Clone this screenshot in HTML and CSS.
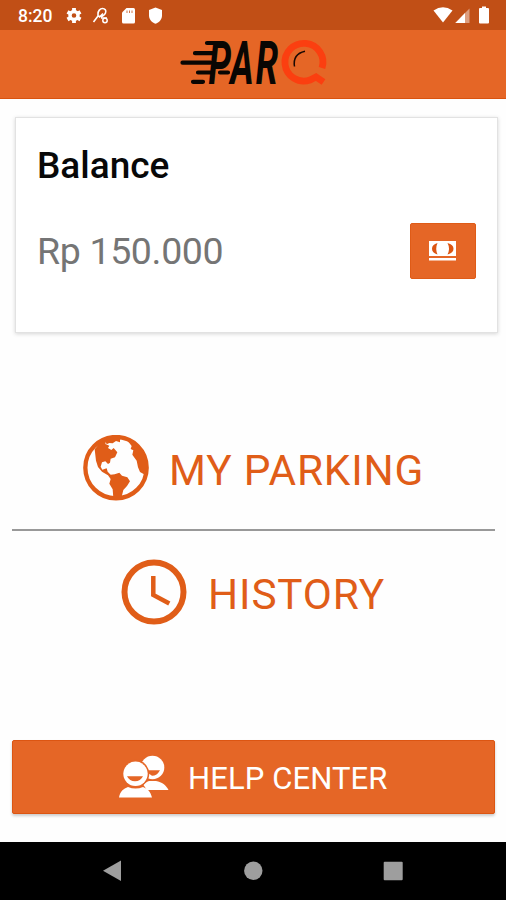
FILE: index.html
```html
<!DOCTYPE html>
<html lang="en">
<head>
<meta charset="utf-8">
<title>ParQ</title>
<link rel="stylesheet" href="styles.css">
</head>
<body>
<div class="status">
  <span class="time">8:20</span>
  <svg class="status-left" viewBox="0 0 100 30" width="100" height="30" fill="#fff">
    <circle cx="9" cy="15.500" r="4" fill="none" stroke="#fff" stroke-width="3.400"/>
    <path d="M9 8v3.500M9 19.500v3.500M2.500 11.800l3.500 2M12 17.500l3.500 2M15.500 11.800l-3.500 2M6 17.500l-3.500 2" stroke="#fff" stroke-width="3.800"/>
    <path d="M33 14c0-3 2-5.500 4.500-5.500s4 2 3 4.500-4 4.500-7.500 3zM33 16l-4.500 6M38 13.500l-4 4M36 18h6" fill="none" stroke="#fff" stroke-width="1.600"/>
    <circle cx="40" cy="20.500" r="2.200" fill="none" stroke="#fff" stroke-width="1.500"/>
    <path d="M61.500 8h7q1.500 0 1.500 1.500V22q0 1.500-1.500 1.500h-10q-1.500 0-1.500-1.500V12.500z"/>
    <path d="M62 10.500v2.500M64.500 10.500v2.500M67 10.500v2.500" stroke="#c35216" stroke-width=".8"/>
    <path d="M90.500 7.500l6.500 2.500v5.500c0 4-3 7-6.500 8.300-3.500-1.300-6.500-4.300-6.500-8.300V10z"/>
  </svg>
  <svg class="status-right" viewBox="0 0 60 30" width="60" height="30" fill="#fff">
    <path d="M-.5 10.500Q9 4 18.500 10.500L9 22.500z"/>
    <path d="M35.500 8.500v14.500h-14.500z" opacity=".45"/>
    <path d="M31 13v10h-9.500z"/>
    <path d="M46 8h2V6.500h4V8h2q1 0 1 1v13.500q0 1-1 1h-8q-1 0-1-1V9q0-1 1-1z"/>
  </svg>
</div>
<header class="header">
  <svg class="logo" viewBox="170 30 170 68" width="170" height="68">
    <g stroke="#090603" stroke-width="4.200" stroke-linecap="round">
      <path d="M207 43h14M195 53.200h19M182.500 62.700h28M198 72.500h15M193 81.800h10M220 72.500h8"/>
    </g>
    <text class="logo-text" transform="translate(208.500 84) scale(.6 1)">PAR</text>
    <path d="M322 68A19 18.800 0 1 0 310 80L316 77L323.500 82" fill="none" stroke="#fb3f10" stroke-width="6.800"/>
    <path d="M294.500 66.500Q292.500 54 305 51.200" fill="none" stroke="#1b0903" stroke-width="1.500"/>
  </svg>
</header>
<main class="content">
  <section class="card">
    <h1 class="card-title">Balance</h1>
    <div class="balance-row">
      <span class="amount">Rp 150.000</span>
      <button class="pay" aria-label="Top up">
        <svg viewBox="0 0 28 22" width="28" height="22">
          <path fill="#fff" d="M0 1h27v15H0zM0 18h27v2.500H0z"/>
          <path fill="#dc5512" d="M8.500 3Q3 4.500 3 8.700T8.500 14.500Q6 8.700 8.500 3zM18.500 3Q24.500 4.500 24.500 8.700T18.500 14.500Q21.500 8.700 18.500 3z"/>
        </svg>
      </button>
    </div>
  </section>
  <div class="item parking">
    <svg viewBox="9 9 198 198" width="66" height="66" fill="#e05d18">
      <circle cx="108" cy="107" r="92" fill="none" stroke="#e05d18" stroke-width="13"/>
      <path d="M44 52L62 30L80 20L76 36L88 41L84 48L94 54L101 48L112 61L105 76L92 80L90 92L84 96L76 88L66 91L62 104L67 113L80 109L83 119L92 128L104 127L118 122L126 131L142 136L150 148L141 162L130 174L124 198L100 198L98 172L88 155L92 141L84 130L66 119L54 105L48 86Z"/>
      <path d="M76 26L90 16L120 16L120 31L108 27L98 34L88 33L80 37Z"/>
      <path d="M138 20L155 42L152 51L160 55L157 68L170 86L174 106L180 120L192 127L199 104L192 66L166 34Z"/>
    </svg>
    <span>MY PARKING</span>
  </div>
  <div class="item history">
    <svg viewBox="0 0 66 66" width="66" height="66" fill="none" stroke="#e05d18">
      <circle cx="33" cy="33" r="29.500" stroke-width="6"/>
      <path d="M32.300 17v19l16 8.500" stroke-width="4.500"/>
    </svg>
    <span>HISTORY</span>
  </div>
  <button class="help">
    <svg viewBox="0 0 50 44" width="50" height="44" fill="#fff">
      <circle cx="33.500" cy="12.500" r="11.800"/>
      <path d="M22 35c1-6 5-8 8-9h7c6 1 10 4 12.500 9z"/>
      <path d="M25 15.200h16q-3 5.500-8 5.500z" fill="#e56626"/>
      <path d="M16 4.800a14 14 0 0 1 8.500 25.300L33 42.500H-1L8 30.100A14 14 0 0 1 16 4.800z" fill="#e56626"/>
      <circle cx="16.500" cy="18.800" r="12.200"/>
      <path d="M8 21.300h16q-2.500 5-8 5t-8-5z" fill="#e56626"/>
      <path d="M0 42.500c1-6 4.500-9 9-10.500q7.500 3 15 0c4.500 1.500 7.500 4.500 9 10.500z"/>
    </svg>
    <span>HELP CENTER</span>
  </button>
</main>
<nav class="nav">
  <svg viewBox="0 0 506 58" width="506" height="58" fill="#9e9e9e">
    <path d="M103 28.800L121 18.500v20.500z"/>
    <circle cx="253.300" cy="28.800" r="9.200"/>
    <rect x="383.700" y="19.800" width="19" height="18.500" rx="1"/>
  </svg>
</nav>
</body>
</html>
```
FILE: styles.css
```css
* { box-sizing: border-box; }
body {
  margin: 0;
  width: 506px;
  height: 900px;
  display: flex;
  flex-direction: column;
  background: #fefefe;
  font-family: Roboto, "Liberation Sans", sans-serif;
  overflow: hidden;
}
svg { display: block; flex: none; }
button { border: 0; padding: 0; font-family: inherit; color: #fff; background: #e56626; }
.status {
  height: 30px;
  display: flex;
  align-items: center;
  padding: 0 12px 0 18px;
  background: #c14f16;
}
.time { width: 47px; font-size: 17.5px; font-weight: 500; color: #fff; line-height: 30px; padding-top: 2px; }
.status-right { margin-left: auto; overflow: visible; }
.header {
  height: 69px;
  display: flex;
  justify-content: center;
  background: #e56626;
  border-bottom: 1px solid #d9530f;
}
.logo { margin-left: 4px; overflow: visible; }
.logo-text {
  font-family: Roboto, sans-serif;
  font-size: 60px;
  font-weight: 700;
  font-style: italic;
  letter-spacing: 3.5px;
  fill: #090603;
}
.content { flex: 1; display: flex; flex-direction: column; padding: 18px 11px 0 12px; }
.card {
  height: 216px;
  margin: 0 -3px 0 3px;
  padding: 26px 21px 0 21px;
  background: #fff;
  border: 1px solid #e2e2e2;
  box-shadow: 0 1px 4px rgba(0, 0, 0, .16);
}
.card-title { margin: 0; font-size: 37px; line-height: 44px; font-weight: 500; color: #080808; }
.balance-row { display: flex; justify-content: space-between; align-items: center; height: 56px; margin-top: 35px; }
.amount { font-size: 37.5px; font-weight: 400; letter-spacing: -.35px; color: #757575; line-height: 56px; }
.pay {
  width: 66px;
  height: 56px;
  display: flex;
  align-items: center;
  justify-content: center;
  border-radius: 2px;
  border: 1px solid #df5b17;
}
.item { display: flex; align-items: center; color: #e05d18; font-size: 42.3px; line-height: 60px; letter-spacing: .85px; }
.item span, .help span { white-space: nowrap; }
.item span { padding-top: 5px; }
.parking { height: 129px; margin-top: 69px; padding: 5px 0 0 71px; gap: 20px; border-bottom: 2px solid #999; }
.history { height: 66px; margin-top: 28px; padding-left: 109px; gap: 21px; }
.help {
  height: 74px;
  margin-top: 115px;
  padding-left: 106px;
  display: flex;
  align-items: center;
  gap: 19px;
  font-size: 31px;
  letter-spacing: .1px;
  border-radius: 2px;
  border: 1px solid #dc5512;
  box-shadow: 0 2px 3px rgba(0, 0, 0, .2);
}
.help span { padding-top: 3px; }
.nav { height: 58px; background: #000; }
```
